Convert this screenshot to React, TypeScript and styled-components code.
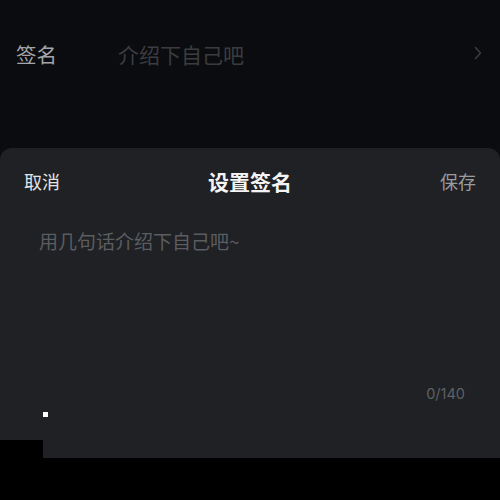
import { FC, useState } from "react";
import styled, { createGlobalStyle } from "styled-components";

const GlobalStyle = createGlobalStyle`
  html, body {
    margin: 0;
    padding: 0;
    background: #0b0c0f;
  }
  * {
    box-sizing: border-box;
  }
`;

const MAX_LEN = 140;

const SignatureRow: FC<{ label: string; value: string }> = ({ label, value }) => (
  <Row>
    <RowLabel>{label}</RowLabel>
    <RowValue>{value}</RowValue>
    <Chevron width="8" height="14" viewBox="0 0 8 14">
      <path d="M1.5 1.5 L6.5 7 L1.5 12.5" fill="none" stroke="#3a3c40" strokeWidth="1.6" strokeLinecap="round" strokeLinejoin="round" />
    </Chevron>
  </Row>
);

export default function App() {
  const [text, setText] = useState("");

  return (
    <Page>
      <GlobalStyle />
      <TopArea>
        <SignatureRow label="签名" value="介绍下自己吧" />
      </TopArea>
      <Sheet>
        <SheetHeader>
          <HeaderAction $tone="primary">取消</HeaderAction>
          <SheetTitle>设置签名</SheetTitle>
          <HeaderAction $tone="muted">保存</HeaderAction>
        </SheetHeader>
        <Editor
          value={text}
          maxLength={MAX_LEN}
          placeholder="用几句话介绍下自己吧~"
          onChange={(e) => setText(e.target.value)}
        />
        <Counter>
          {text.length}/{MAX_LEN}
        </Counter>
        {/* keyboard edge peeking in at the bottom-left */}
        <KeyboardCorner />
        <Caret />
      </Sheet>
      <BottomBar />
    </Page>
  );
}

const Page = styled.div`
  width: 500px;
  height: 500px;
  display: flex;
  flex-direction: column;
  background: #0b0c0f;
  font-family: "Noto Sans CJK SC", "Noto Sans", sans-serif;
  overflow: hidden;
`;

const TopArea = styled.div`
  height: 148px;
  padding-top: 33px;
`;

const Row = styled.div`
  display: flex;
  align-items: center;
  height: 42px;
  padding: 0 18px 0 16px;
`;

const RowLabel = styled.span`
  width: 102px;
  font-size: 20.5px;
  color: #a4a5a8;
`;

const RowValue = styled.span`
  flex: 1;
  font-size: 21px;
  color: #3b3c40;
`;

const Chevron = styled.svg`
  margin-top: -3px;
`;

const Sheet = styled.div`
  position: relative;
  height: 310px;
  display: flex;
  flex-direction: column;
  background: #1f2125;
  border-radius: 12px 12px 0 0;
`;

const SheetHeader = styled.div`
  height: 66px;
  display: flex;
  align-items: center;
  justify-content: space-between;
  padding: 0 24px;
`;

const HeaderAction = styled.span<{ $tone: "primary" | "muted" }>`
  font-size: 18px;
  color: ${({ $tone }) => ($tone === "primary" ? "#e2e3e5" : "#9a9b9e")};
`;

const SheetTitle = styled.span`
  font-size: 21px;
  font-weight: bold;
  color: #f4f4f5;
`;

const Editor = styled.textarea`
  flex: 1;
  margin: 14px 38px 0 39px;
  padding: 0;
  border: none;
  outline: none;
  resize: none;
  background: transparent;
  font-family: inherit;
  font-size: 19px;
  line-height: 26px;
  color: #e2e3e5;

  &::placeholder {
    color: #5b5d61;
  }
`;

const Counter = styled.div`
  height: 104px;
  padding: 30px 35px 0 0;
  text-align: right;
  font-family: "Inter", "Noto Sans", sans-serif;
  font-size: 14.5px;
  line-height: 20px;
  color: #5e6064;
`;

const KeyboardCorner = styled.div`
  position: absolute;
  left: 0;
  bottom: 0;
  width: 43px;
  height: 18px;
  background: #000;
`;

const Caret = styled.div`
  position: absolute;
  left: 43px;
  top: 264px;
  width: 5px;
  height: 5px;
  background: #fff;
`;

const BottomBar = styled.div`
  flex: 1;
  background: #000;
`;
